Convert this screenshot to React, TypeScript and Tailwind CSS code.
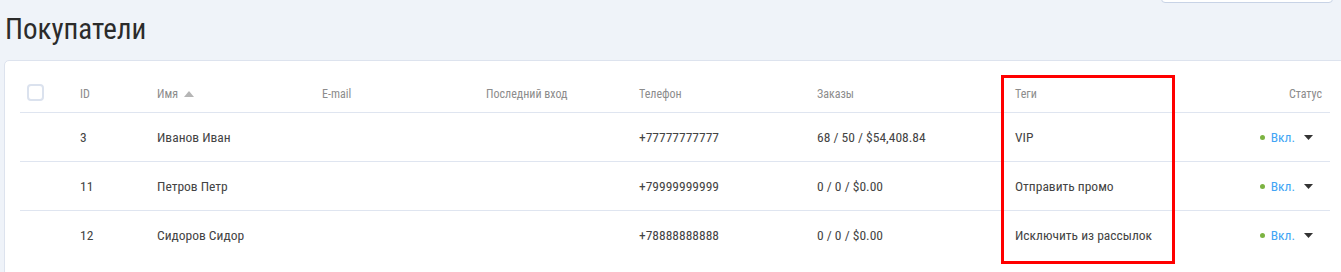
import React from 'react';

type Customer = {
  id: number;
  name: string;
  phone: string;
  orders: string;
  tag: string;
};

const customers: Customer[] = [
  { id: 3, name: 'Иванов Иван', phone: '+77777777777', orders: '68 / 50 / $54,408.84', tag: 'VIP' },
  { id: 11, name: 'Петров Петр', phone: '+79999999999', orders: '0 / 0 / $0.00', tag: 'Отправить промо' },
  { id: 12, name: 'Сидоров Сидор', phone: '+78888888888', orders: '0 / 0 / $0.00', tag: 'Исключить из рассылок' },
];

const cols = 'grid grid-cols-[60px_77px_165px_164px_153px_178px_198px_1fr_120px] items-center';

const StatusCell = () => (
  <div className="flex items-center justify-end pr-[17px]">
    <span className="w-[5px] h-[5px] rounded-full bg-[#7cb342] mr-[6px]"></span>
    <span className="text-[#42a5f5]">Вкл.</span>
    <svg className="ml-[9px]" width="9" height="5" viewBox="0 0 9 5">
      <path d="M0 0h9L4.5 5z" fill="#333" />
    </svg>
  </div>
);

const App = () => {
  return (
    <div className="min-h-screen bg-[#eff3f9] pl-[4px] overflow-hidden font-stretch-[85%]" style={{ fontFamily: 'Roboto, "Noto Sans", sans-serif' }}>
      {/* Top toolbar (scrolled) */}
      <div className="flex justify-end pr-[8px]">
        <div className="w-[172px] h-[30px] -mt-[27px] bg-white border border-[#c8d3e6] rounded-[4px]"></div>
      </div>

      <h1 className="mt-[9px] ml-[1px] text-[29px] leading-[34px] text-[#2b2b2b]">Покупатели</h1>

      {/* Customers card */}
      <div className="relative mt-[14px] -mr-[10px] bg-white border border-[#dde3ee] rounded-[5px] pt-[14px] pl-[15px] pr-[20px] pb-[20px]">
        <div className={`${cols} h-[38px] text-[12px] text-[#8c8c8c] border-b border-[#dfe5f0]`}>
          <div className="pl-[7px] pb-[2px]">
            <div className="w-[17px] h-[17px] rounded-[4px] border-2 border-[#dbe2ee]"></div>
          </div>
          <div>ID</div>
          <div className="flex items-center">
            Имя
            <svg className="ml-[6px]" width="10" height="6" viewBox="0 0 10 6">
              <path d="M0 6h10L5 0z" fill="#b5b5b5" />
            </svg>
          </div>
          <div>E-mail</div>
          <div>Последний вход</div>
          <div>Телефон</div>
          <div>Заказы</div>
          <div>Теги</div>
          <div className="text-right pr-[8px]">Статус</div>
        </div>

        {customers.map((c, i) => (
          <div
            key={c.id}
            className={`${cols} h-[49px] text-[13.5px] text-[#444] ${i < customers.length - 1 ? 'border-b border-[#dfe5f0]' : ''}`}
          >
            <div></div>
            <div>{c.id}</div>
            <div>{c.name}</div>
            <div></div>
            <div></div>
            <div>{c.phone}</div>
            <div>{c.orders}</div>
            <div>{c.tag}</div>
            <StatusCell />
          </div>
        ))}

        {/* Annotation highlight */}
        <div className="absolute left-[996px] top-[14px] w-[174px] h-[189px] border-[3px] border-[#ff0000] pointer-events-none"></div>
      </div>
    </div>
  );
};

export default App;
